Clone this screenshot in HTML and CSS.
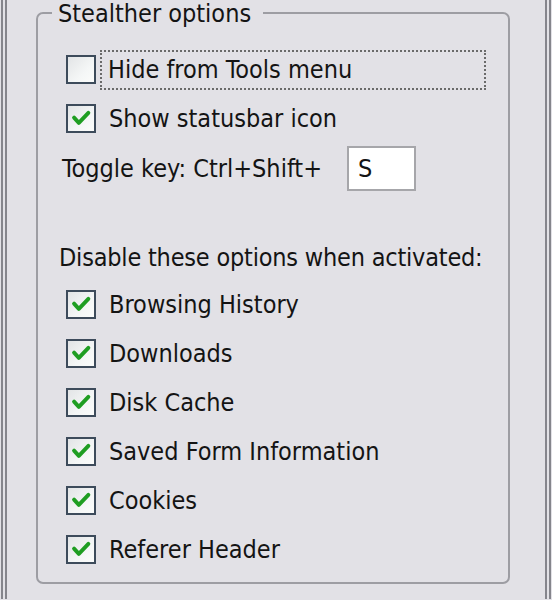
FILE: index.html
```html
<!DOCTYPE html>
<html>
<head>
<meta charset="utf-8">
<link rel="stylesheet" href="styles.css">
</head>
<body>
<div class="page">
  <fieldset class="group">
    <legend class="legend">Stealther options</legend>
    <div class="row row-focus">
      <span class="cb"></span>
      <span class="label focus">Hide from Tools menu</span>
    </div>
    <div class="row">
      <span class="cb checked"><svg viewBox="0 0 30 28"><path d="M7 13 L12.5 19 L23.5 7.5" /></svg></span>
      <span class="label">Show statusbar icon</span>
    </div>
    <div class="toggle">
      <span class="plain">Toggle key: Ctrl+Shift+</span>
      <span class="keybox">S</span>
    </div>
    <div class="heading">Disable these options when activated:</div>
    <div class="list">
      <div class="row"><span class="cb checked"><svg viewBox="0 0 30 28"><path d="M7 13 L12.5 19 L23.5 7.5" /></svg></span><span class="label">Browsing History</span></div>
      <div class="row"><span class="cb checked"><svg viewBox="0 0 30 28"><path d="M7 13 L12.5 19 L23.5 7.5" /></svg></span><span class="label">Downloads</span></div>
      <div class="row"><span class="cb checked"><svg viewBox="0 0 30 28"><path d="M7 13 L12.5 19 L23.5 7.5" /></svg></span><span class="label">Disk Cache</span></div>
      <div class="row"><span class="cb checked"><svg viewBox="0 0 30 28"><path d="M7 13 L12.5 19 L23.5 7.5" /></svg></span><span class="label">Saved Form Information</span></div>
      <div class="row"><span class="cb checked"><svg viewBox="0 0 30 28"><path d="M7 13 L12.5 19 L23.5 7.5" /></svg></span><span class="label">Cookies</span></div>
      <div class="row"><span class="cb checked"><svg viewBox="0 0 30 28"><path d="M7 13 L12.5 19 L23.5 7.5" /></svg></span><span class="label">Referer Header</span></div>
    </div>
  </fieldset>
</div>
</body>
</html>
```
FILE: styles.css
```css
html, body {
  margin: 0;
  padding: 0;
  background: #e2e1e6;
}
body {
  width: 552px;
  height: 600px;
  overflow: hidden;
  font-family: "DejaVu Sans Condensed", "DejaVu Sans", sans-serif;
  font-stretch: condensed;
  font-size: 25px;
  color: #141414;
}
.page {
  box-sizing: border-box;
  height: 600px;
  margin-left: 1px;
  width: 550px;
  border-left: 6px double #85858c;
  border-right: 6px double #85858c;
  padding: 0 0 0 29px;
}
.group {
  box-sizing: border-box;
  width: 474px;
  height: 585px;
  margin: -1px 0 0 0;
  padding: 0 0 0 28px;
  border: 2px solid #9d9da3;
  border-radius: 7px;
}
.legend {
  margin-left: -14px;
  padding: 2px 12px 0 6px;
  line-height: 26px;
}
.row {
  display: flex;
  align-items: center;
  height: 49px;
}
.row-focus {
  margin-top: 18px;
}
.cb {
  box-sizing: border-box;
  flex: none;
  width: 30px;
  height: 29px;
  border: 2px solid #3d4b5b;
  background: linear-gradient(135deg, #e2e4e6 0%, #f4f6f6 60%, #fbfcfb 100%);
  margin-right: 13px;
}
.cb svg {
  display: block;
  width: 26px;
  height: 25px;
}
.cb svg path {
  fill: none;
  stroke: #1f9e22;
  stroke-width: 4.5;
  stroke-linecap: round;
  stroke-linejoin: round;
}
.label {
  line-height: 32px;
  white-space: nowrap;
}
.focus {
  margin-left: -7px;
  padding: 2px 6px;
  width: 382px;
  box-sizing: border-box;
  outline: 2px dotted #6a6a6a;
  outline-offset: 0;
}
.toggle {
  display: flex;
  align-items: center;
  height: 51px;
  margin-left: -4px;
}
.plain {
  white-space: nowrap;
}
.keybox {
  box-sizing: border-box;
  width: 69px;
  height: 45px;
  margin-left: 25px;
  border: 2px solid #a6a6aa;
  background: #ffffff;
  padding-left: 9px;
  line-height: 41px;
}
.heading {
  margin-top: 49px;
  margin-left: -7px;
  letter-spacing: -0.2px;
  line-height: 30px;
  white-space: nowrap;
}
.list {
  margin-top: 7px;
}
```
